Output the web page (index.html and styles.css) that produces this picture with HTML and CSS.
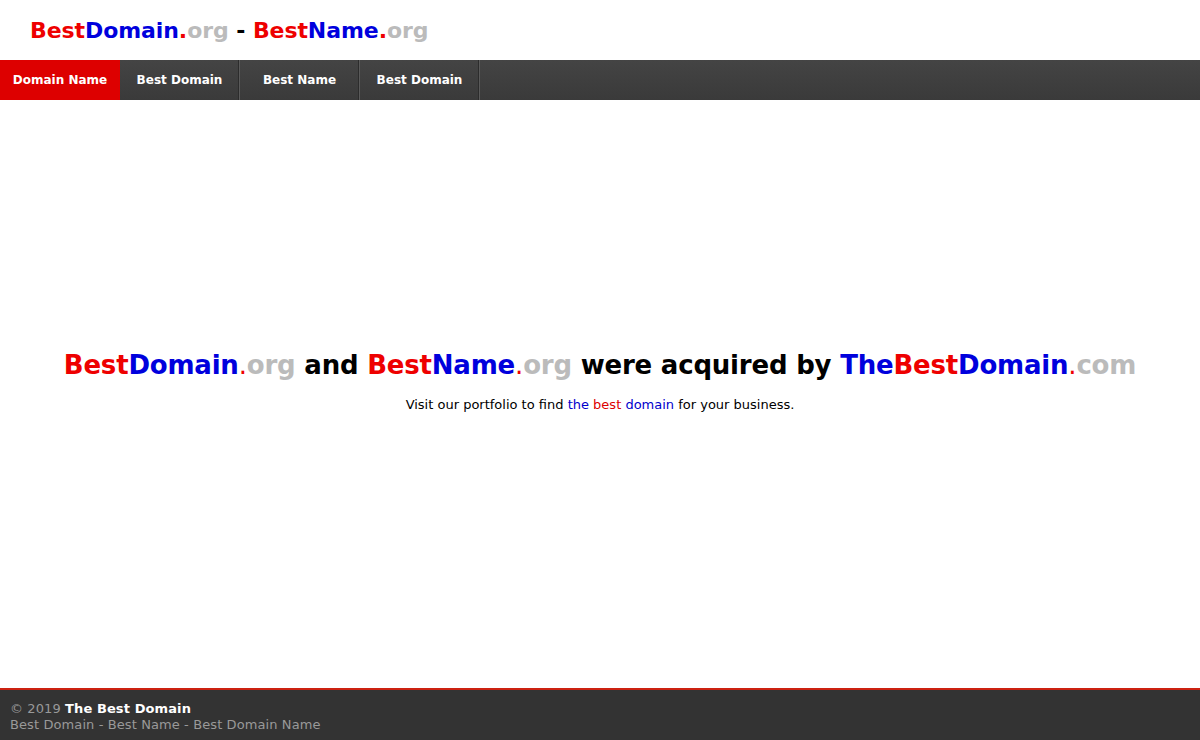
FILE: index.html
```html
<!DOCTYPE html>
<html lang="en">
<head>
<meta charset="utf-8">
<title>BestDomain.org - BestName.org</title>
<link rel="stylesheet" href="styles.css">
</head>
<body>
<div class="page">
  <header class="header">
    <h1 class="logo"><span class="r">Best</span><span class="b">Domain</span><span class="r">.</span><span class="g">org</span> <span class="k">-</span> <span class="r">Best</span><span class="b">Name</span><span class="r">.</span><span class="g">org</span></h1>
  </header>
  <nav class="nav">
    <a class="nav-item active" href="#">Domain Name</a>
    <a class="nav-item" href="#">Best Domain</a>
    <a class="nav-item" href="#">Best Name</a>
    <a class="nav-item" href="#">Best Domain</a>
  </nav>
  <main class="main">
    <h2 class="headline"><span class="r">Best</span><span class="b">Domain</span><span class="r dot">.</span><span class="g">org</span> and <span class="r">Best</span><span class="b">Name</span><span class="r dot">.</span><span class="g">org</span> were acquired by <span class="b">The</span><span class="r">Best</span><span class="b">Domain</span><span class="r dot">.</span><span class="g">com</span></h2>
    <p class="lead">Visit our portfolio to find <span class="b2">the</span> <span class="r2">best</span> <span class="b2">domain</span> for your business.</p>
  </main>
  <footer class="footer">
    <div class="copy">© 2019 <strong>The Best Domain</strong></div>
    <div class="links">Best Domain - Best Name - Best Domain Name</div>
  </footer>
</div>
</body>
</html>
```
FILE: styles.css
```css
html, body {
  margin: 0;
  padding: 0;
  background: #fff;
  font-family: Verdana, "DejaVu Sans", sans-serif;
  color: #000;
}
.page {
  display: flex;
  flex-direction: column;
  min-height: 740px;
}
.r { color: #ee0000; }
.b { color: #0000dd; }
.g { color: #bbbbbb; }
.k { color: #000; }
.r2 { color: #dd0000; }
.b2 { color: #0000cc; }

.header {
  height: 60px;
  display: flex;
  align-items: center;
  padding-left: 30px;
}
.logo {
  margin: 0;
  font-size: 22px;
  font-weight: bold;
  letter-spacing: -0.08px;
}
.nav {
  display: flex;
  height: 40px;
  background: linear-gradient(#444444, #3a3a3a);
}
.nav-item {
  width: 120px;
  box-sizing: border-box;
  display: flex;
  align-items: center;
  justify-content: center;
  padding-bottom: 1px;
  color: #fff;
  font-size: 12px;
  font-weight: bold;
  text-decoration: none;
  border-right: 1px solid #5a5a5a;
  box-shadow: inset -1px 0 0 #2c2c2c;
}
.nav-item.active {
  background: #dd0000;
  border-right: none;
  box-shadow: none;
}
.main {
  flex: 1;
  display: flex;
  flex-direction: column;
  align-items: center;
  justify-content: center;
  padding-bottom: 26px;
}
.headline {
  margin: 0;
  font-size: 26px;
  font-weight: bold;
  letter-spacing: -0.2px;
}
.headline .dot { font-weight: normal; }
.lead {
  margin: 17px 0 0;
  font-size: 13px;
}
.footer {
  background: #333;
  border-top: 2px solid #cc2211;
  height: 52px;
  box-sizing: border-box;
  padding: 11px 10px 0;
  font-size: 13px;
  letter-spacing: 0.1px;
  color: #999;
  line-height: 16px;
}
.footer strong { color: #fff; }
```
